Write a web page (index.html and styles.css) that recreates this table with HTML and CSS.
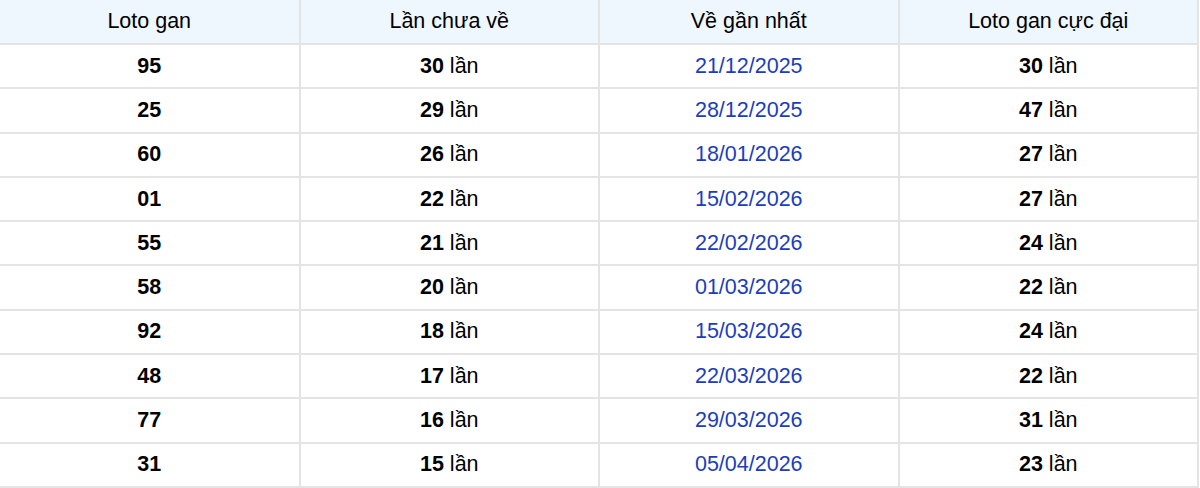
FILE: index.html
```html
<!DOCTYPE html>
<html lang="vi">
<head>
<meta charset="utf-8">
<title>Loto gan</title>
<link rel="stylesheet" href="styles.css">
</head>
<body>
<table class="gan">
  <thead>
    <tr><th>Loto gan</th><th>Lần chưa về</th><th>Về gần nhất</th><th>Loto gan cực đại</th></tr>
  </thead>
  <tbody>
    <tr><td><b>95</b></td><td><b>30</b> lần</td><td class="date">21/12/2025</td><td><b>30</b> lần</td></tr>
    <tr><td><b>25</b></td><td><b>29</b> lần</td><td class="date">28/12/2025</td><td><b>47</b> lần</td></tr>
    <tr><td><b>60</b></td><td><b>26</b> lần</td><td class="date">18/01/2026</td><td><b>27</b> lần</td></tr>
    <tr><td><b>01</b></td><td><b>22</b> lần</td><td class="date">15/02/2026</td><td><b>27</b> lần</td></tr>
    <tr><td><b>55</b></td><td><b>21</b> lần</td><td class="date">22/02/2026</td><td><b>24</b> lần</td></tr>
    <tr><td><b>58</b></td><td><b>20</b> lần</td><td class="date">01/03/2026</td><td><b>22</b> lần</td></tr>
    <tr><td><b>92</b></td><td><b>18</b> lần</td><td class="date">15/03/2026</td><td><b>24</b> lần</td></tr>
    <tr><td><b>48</b></td><td><b>17</b> lần</td><td class="date">22/03/2026</td><td><b>22</b> lần</td></tr>
    <tr><td><b>77</b></td><td><b>16</b> lần</td><td class="date">29/03/2026</td><td><b>31</b> lần</td></tr>
    <tr><td><b>31</b></td><td><b>15</b> lần</td><td class="date">05/04/2026</td><td><b>23</b> lần</td></tr>
  </tbody>
</table>
</body>
</html>
```

FILE: styles.css
```css
html, body {
  margin: 0;
  padding: 0;
  background: #ffffff;
}
body {
  font-family: "Liberation Sans", Arial, sans-serif;
  color: #000000;
}
.gan {
  width: 1199px;
  border-collapse: collapse;
  table-layout: fixed;
  font-size: 21.5px;
}
.gan th, .gan td {
  text-align: center;
  vertical-align: middle;
  border-right: 2px solid #e4e4e4;
  border-bottom: 2px solid #e4e4e4;
  padding: 0;
}
.gan th {
  background: #eef6fe;
  font-weight: normal;
  height: 43px;
}
.gan td {
  height: 42.3px;
}
.gan b {
  font-weight: bold;
}
.gan td.date {
  color: #1a3dbd;
}
```
